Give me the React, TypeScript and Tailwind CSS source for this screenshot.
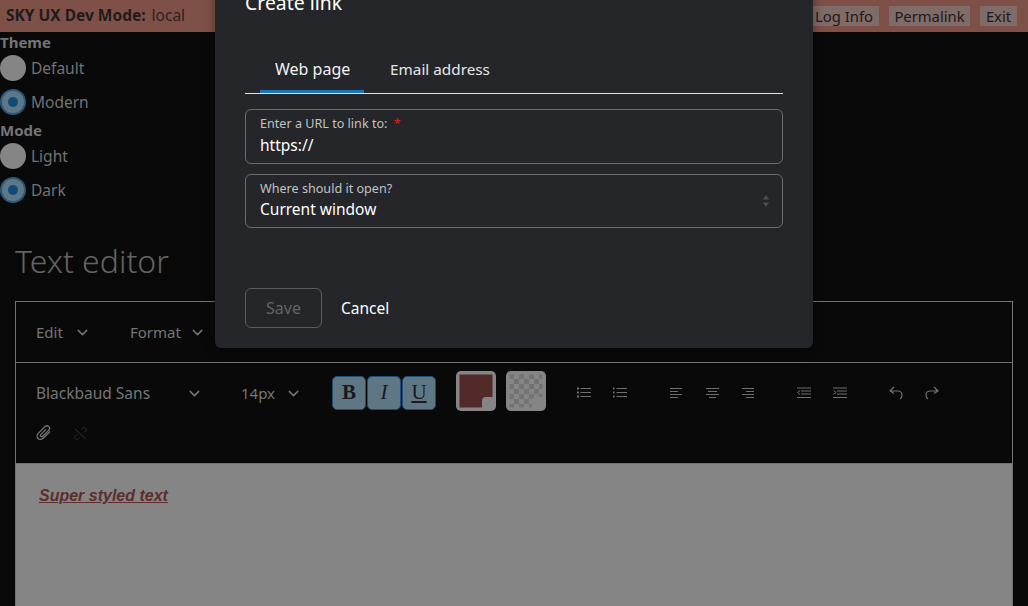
import { ChevronDown } from "lucide-react"

const font = { fontFamily: '"Noto Sans", sans-serif' }

function Radio({ label, checked }: { label: string; checked?: boolean }) {
  return (
    <div className="flex h-[34px] items-center gap-[5px]">
      {checked ? (
        <span className="flex h-[26px] w-[26px] items-center justify-center rounded-full border-2 border-[#285a80] bg-[#5f7785]">
          <span className="h-[10px] w-[10px] rounded-full bg-[#0f4a78]" />
        </span>
      ) : (
        <span className="h-[26px] w-[26px] rounded-full bg-[#858585]" />
      )}
      <span className="pt-[2px] text-[15.5px] text-[#727272]">{label}</span>
    </div>
  )
}

function HeaderButton({ label, className }: { label: string; className: string }) {
  return <span className={`flex h-5 items-center justify-center bg-[#7f6b68] text-[14.8px] text-[#1d1a1a] ${className}`}>{label}</span>
}

function Dropdown({ label, className }: { label: string; className: string }) {
  return (
    <div className={`flex items-center justify-between ${className}`}>
      <span className="text-[#757575]">{label}</span>
      <ChevronDown size={17} strokeWidth={2} className="text-[#757575]" />
    </div>
  )
}

function StyleButton({ children, className }: { children: string; className: string }) {
  return (
    <span
      className={`flex h-[34px] w-[34px] items-center justify-center rounded-[5px] border border-[#1f4f78] bg-[#5f7785] text-[21px] text-[#1a1a1a] ${className}`}
      style={{ fontFamily: '"Liberation Serif", serif' }}
    >
      {children}
    </span>
  )
}

function Swatch({ checker }: { checker?: boolean }) {
  return (
    <svg width="40" height="40" viewBox="0 0 40 40">
      <defs>
        <pattern id="checker" width="10" height="10" patternUnits="userSpaceOnUse" x="3" y="3">
          <rect width="10" height="10" fill="#858585" />
          <rect width="5" height="5" fill="#737373" />
          <rect x="5" y="5" width="5" height="5" fill="#737373" />
        </pattern>
      </defs>
      <rect width="40" height="40" rx="5" fill="#858585" />
      <path d="M3.5 3.5H36.5V26H30Q26 26 26 30V36.5H3.5Z" fill={checker ? "url(#checker)" : "#532a2a"} />
    </svg>
  )
}

const tool = "#6f6f6f"

function Lines({ kind }: { kind: "left" | "center" | "right" }) {
  const rows = kind === "left" ? [[0, 12], [0, 8], [0, 12], [0, 8]] : kind === "center" ? [[0, 13], [2, 9], [0, 13], [3, 7]] : [[0, 12], [4, 8], [0, 12], [4, 8]]
  return (
    <svg width="14" height="12" viewBox="0 0 14 12" stroke={tool}>
      {rows.map(([x, w], i) => (
        <line key={i} x1={x} x2={x + w} y1={1.5 + i * 3} y2={1.5 + i * 3} />
      ))}
    </svg>
  )
}

function ListIcon({ numbered }: { numbered?: boolean }) {
  return (
    <svg width="14" height="12" viewBox="0 0 14 12" stroke={tool} fill={tool}>
      {[1.5, 5.5, 9.5].map((y) => (
        <g key={y}>
          <line x1="3.5" x2="14" y1={y} y2={y} />
          <rect x="0" y={y - 1} width={numbered ? 1.5 : 2} height="2" stroke="none" />
        </g>
      ))}
    </svg>
  )
}

function IndentIcon({ out }: { out?: boolean }) {
  return (
    <svg width="14" height="12" viewBox="0 0 14 12" stroke={tool} fill="none">
      <line x1="0" x2="14" y1="1" y2="1" />
      <line x1="4" x2="14" y1="4" y2="4" />
      <line x1="4" x2="14" y1="7" y2="7" />
      <line x1="0" x2="14" y1="10.5" y2="10.5" />
      <path d={out ? "M3 3.5L0.5 5.5L3 7.5" : "M0.5 3.5L3 5.5L0.5 7.5"} />
    </svg>
  )
}

function HistoryIcon({ redo }: { redo?: boolean }) {
  return (
    <svg width="14" height="14" viewBox="0 0 14 14" stroke={tool} fill="none" strokeWidth="1.2" className={redo ? "-scale-x-100" : ""}>
      <path d="M5 1L1 5L5 7.5M1 5H8.5C11.5 5 13 7 13 9C13 11 12 12.5 11 13" />
    </svg>
  )
}

export default function App() {
  return (
    <div className="relative h-[606px] w-full overflow-hidden bg-[#090909]" style={font}>
      <div className="flex h-8 items-center justify-between bg-[#7f5048] pl-[6px] pr-[11px]">
        <div className="text-[15.5px] text-[#1f1c1c]">
          <span className="font-bold">SKY UX Dev Mode:</span> <span className="ml-[2px] text-[#2b2322]">local</span>
        </div>
        <div className="flex gap-[10px]">
          <HeaderButton label="Log Info" className="w-[70px]" />
          <HeaderButton label="Permalink" className="w-[81px]" />
          <HeaderButton label="Exit" className="w-[37px]" />
        </div>
      </div>

      <div className="h-[178px]">
        <div className="text-[15px] font-bold leading-5 text-[#757575]">Theme</div>
        <div className="-mt-px">
          <Radio label="Default" />
          <Radio label="Modern" checked />
        </div>
        <div className="mt-px text-[15px] font-bold leading-5 text-[#757575]">Mode</div>
        <div className="-mt-px">
          <Radio label="Light" />
          <Radio label="Dark" checked />
        </div>
      </div>

      <div className="px-[15px]">
        <h1 className="mb-[16px] h-[75px] pt-[29px] text-[32px] font-light leading-[44px] text-[#636363]">Text editor</h1>
        <div className="h-[400px] border border-[#757575]">
          <div className="flex h-[61px] items-center gap-[39px] border-b border-[#757575] pl-5 text-[15px]">
            <Dropdown label="Edit" className="w-[55px]" />
            <Dropdown label="Format" className="w-[76px]" />
          </div>
          <div className="h-[100px] pl-5">
            <div className="flex h-[60px] items-center">
              <Dropdown label="Blackbaud Sans" className="w-[167px] pt-px text-[15.5px]" />
              <Dropdown label="14px" className="ml-[38px] w-[61px] text-[15px]" />
              <div className="ml-[30px] flex gap-px">
                <StyleButton className="font-bold">B</StyleButton>
                <StyleButton className="italic">I</StyleButton>
                <StyleButton className="underline">U</StyleButton>
              </div>
              <div className="-mt-[4px] ml-[20px] flex gap-[10px]">
                <Swatch />
                <Swatch checker />
              </div>
              <div className="ml-[31px] flex gap-[22px]">
                <ListIcon />
                <ListIcon numbered />
              </div>
              <div className="ml-[43px] flex gap-[22px]">
                <Lines kind="left" />
                <Lines kind="center" />
                <Lines kind="right" />
              </div>
              <div className="ml-[41px] flex gap-[22px]">
                <IndentIcon out />
                <IndentIcon />
              </div>
              <div className="ml-[42px] flex gap-[22px]">
                <HistoryIcon />
                <HistoryIcon redo />
              </div>
            </div>
            <div className="flex h-5 items-center gap-[22px]">
              <svg width="16" height="16" viewBox="0 0 16 16" fill="none" stroke="#757575" strokeWidth="1.3">
                <path d="M14 6.5L7.5 13C5.8 14.7 3.2 14.8 1.9 13.5C0.6 12.2 0.8 9.8 2.5 8.1L8.8 1.8C10 0.6 11.8 0.6 12.8 1.6C13.8 2.6 13.7 4.3 12.6 5.4L6.8 11.2C6.2 11.8 5.3 11.9 4.8 11.4C4.3 10.9 4.4 10 5 9.4L10 4.4" />
              </svg>
              <svg width="13" height="13" viewBox="0 0 14 14" fill="none" stroke="#353535" strokeWidth="1">
                <path d="M1 2L12.5 13M8 2.5L9.5 1.2C10.5 0.4 11.8 0.6 12.6 1.4C13.4 2.2 13.5 3.4 12.6 4.4L11 6M6 11.5L4.5 12.8C3.5 13.6 2.2 13.4 1.4 12.6C0.6 11.8 0.5 10.6 1.4 9.6L3 8" />
              </svg>
            </div>
          </div>
          <div className="h-[240px] border-t border-[#757575] bg-[#858585] px-[23px] pt-[19px]">
            <span className="text-[16px] font-bold italic text-[#5e2d2d] underline" style={{ fontFamily: '"Liberation Sans", sans-serif' }}>
              Super styled text
            </span>
          </div>
        </div>
      </div>

      {/* ---------- Create link modal ----------- */}
      <div className="absolute left-[215px] top-[-20px] flex h-[368px] w-[598px] flex-col rounded-md bg-[#24262a] px-[30px] shadow-[0_0_12px_rgba(0,0,0,0.4)]">
        <h2 className="pt-[9px] text-[19.4px] leading-7 text-white">Create link</h2>
        <div className="mt-[20px] flex h-[57px] items-end border-b border-[#e4e4e4] pl-[15px]">
          <div className="flex h-[56px] w-[104px] items-center border-b-[3px] border-[#1b75bb] pl-[15px] pt-[11px] text-[16px] text-[#f2f2f2]">
            Web page
          </div>
          <div className="flex h-[56px] items-center pl-[26px] pt-[8px] text-[15.3px] text-[#e6e6e6]">Email address</div>
        </div>
        <div className="mt-[15px] flex h-[55px] flex-col rounded-md border border-[#6a6c70] px-[14px] pt-[6px]">
          <span className="text-[12.6px] leading-[16px] text-[#c2c2c2]">
            Enter a URL to link to: <span className="ml-[3px] text-[#e02020]">*</span>
          </span>
          <span className="mt-[1px] text-[15.5px] leading-6 text-white">https://</span>
        </div>
        <div className="relative mt-[10px] flex h-[54px] flex-col rounded-md border border-[#6a6c70] px-[14px] pt-[6px]">
          <span className="text-[12.6px] leading-[16px] text-[#c2c2c2]">Where should it open?</span>
          <span className="text-[15.5px] leading-6 text-white">Current window</span>
          <svg width="8" height="12" viewBox="0 0 8 12" fill="#4d4f53" className="absolute right-[12px] top-[20px]">
            <path d="M4 0L7 4.5H1ZM4 12L1 7.5H7Z" />
          </svg>
        </div>
        <div className="mt-[60px] flex items-center gap-[19px]">
          <span className="flex h-10 w-[77px] items-center justify-center rounded-md border border-[#5a5c60] text-[16px] text-[#63656a]">Save</span>
          <span className="pt-[2px] text-[15.5px] text-white">Cancel</span>
        </div>
      </div>
    </div>
  )
}
